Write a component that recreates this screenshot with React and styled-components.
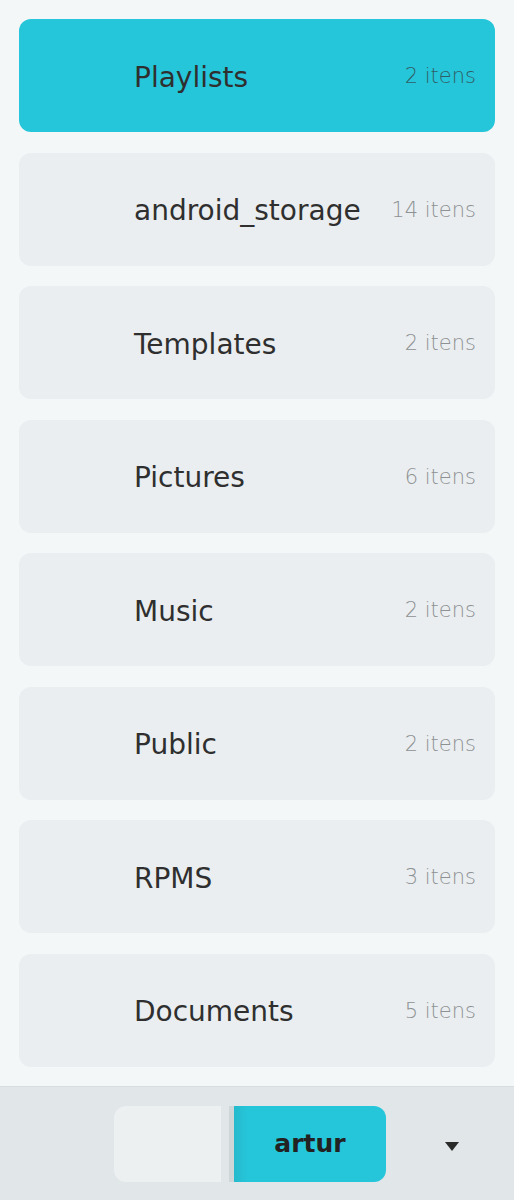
import React from "react";
import styled, { createGlobalStyle } from "styled-components";

const Global = createGlobalStyle`
  html, body {
    margin: 0;
    padding: 0;
    background: #f4f7f8;
    font-family: "DejaVu Sans", "Noto Sans", sans-serif;
  }
`;

const Page = styled.div`
  width: 514px;
  height: 1200px;
  display: flex;
  flex-direction: column;
  background: #f4f7f8;
`;

const List = styled.div`
  flex: 1;
  display: flex;
  flex-direction: column;
  gap: 20.5px;
  padding: 19px 19px 0 19px;
`;

const Card = styled.div`
  height: 113px;
  flex-shrink: 0;
  border-radius: 12px;
  background: ${(p) => (p.$active ? "#26c6da" : "#eaeef0")};
  display: flex;
  align-items: center;
  padding: 0 19px 0 115px;
  box-sizing: border-box;
`;

const Name = styled.span`
  flex: 1;
  font-size: 28px;
  color: #2f2f2f;
  margin-top: 3px;
`;

const Count = styled.span`
  font-family: "DejaVu Sans ExtraLight", "DejaVu Sans", sans-serif;
  font-size: 21px;
  font-weight: 200;
  color: ${(p) => (p.$active ? "#2f5f66" : "#8e9193")};
  margin-top: 1px;
`;

const Footer = styled.div`
  height: 114px;
  flex-shrink: 0;
  border-top: 1px solid #d8dee0;
  background: #e1e6e8;
  display: flex;
  align-items: center;
  padding-left: 114px;
  box-sizing: border-box;
`;

const Switch = styled.div`
  display: flex;
  height: 76px;
`;

const UserSlot = styled.div`
  width: 107px;
  background: #edf0f1;
  border-radius: 12px 0 0 12px;
`;

const Divider = styled.div`
  width: 5px;
  margin-left: 8px;
  background: #cfd6d8;
`;

const UserButton = styled.div`
  width: 152px;
  border-radius: 0 12px 12px 0;
  background: linear-gradient(90deg, #25b9cc 0px, #26c6da 14px);
  display: flex;
  align-items: center;
  justify-content: center;
  font-size: 25px;
  font-weight: bold;
  color: #222;
`;

const Caret = styled.svg`
  margin-left: 59px;
  margin-top: 6px;
`;

const folders = [
  { name: "Playlists", count: 2, active: true },
  { name: "android_storage", count: 14 },
  { name: "Templates", count: 2 },
  { name: "Pictures", count: 6 },
  { name: "Music", count: 2 },
  { name: "Public", count: 2 },
  { name: "RPMS", count: 3 },
  { name: "Documents", count: 5 },
];

export default function App() {
  return (
    <Page>
      <Global />
      <List>
        {folders.map((f) => (
          <Card key={f.name} $active={f.active}>
            <Name>{f.name}</Name>
            <Count $active={f.active}>{f.count} itens</Count>
          </Card>
        ))}
      </List>
      <Footer>
        <Switch>
          <UserSlot />
          <Divider />
          <UserButton>artur</UserButton>
        </Switch>
        <Caret width="14" height="10" viewBox="0 0 14 10">
          <path d="M0 0 L14 0 L7 9 Z" fill="#2a2a2a" />
        </Caret>
      </Footer>
    </Page>
  );
}
